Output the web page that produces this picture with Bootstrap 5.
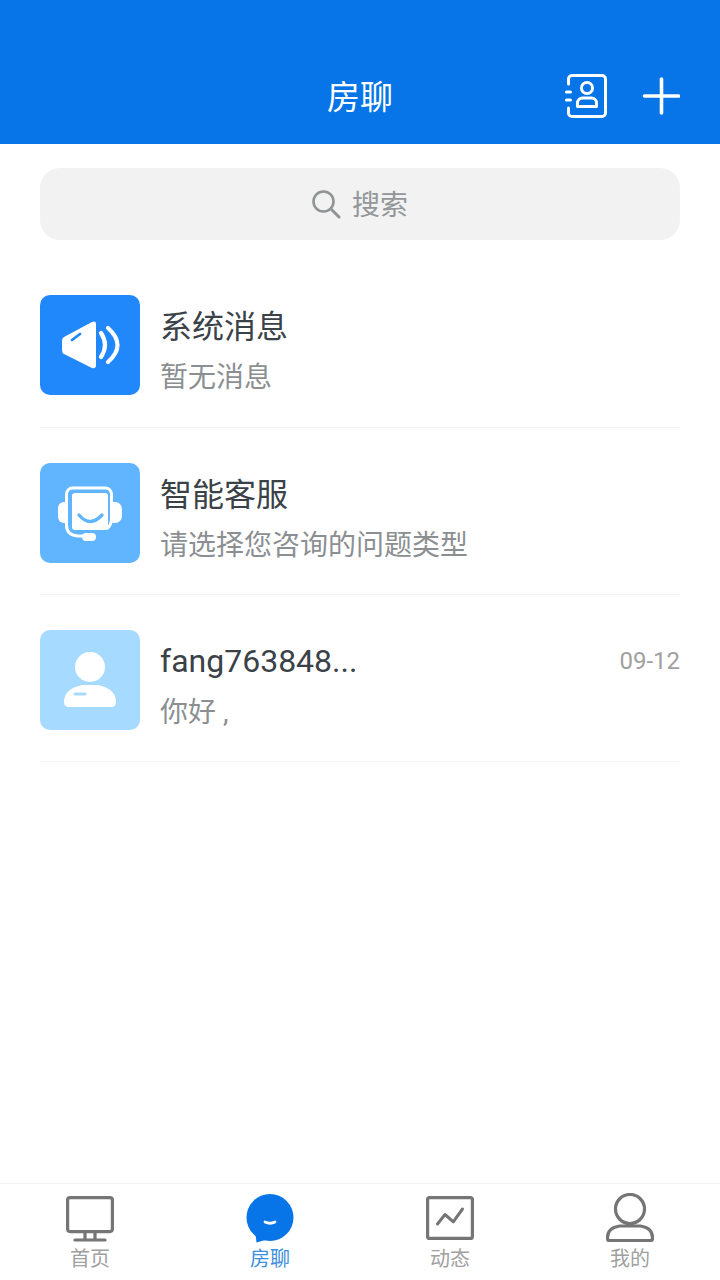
<!DOCTYPE html>
<html lang="zh-CN">
<head>
<meta charset="utf-8">
<title>房聊</title>
<link href="https://cdn.jsdelivr.net/npm/bootstrap@5.3.0/dist/css/bootstrap.min.css" rel="stylesheet">
<style>
html,body{height:100%;margin:0}
body{width:720px;height:1280px;background:#fff;font-family:Roboto,"Noto Sans CJK SC",sans-serif;overflow:hidden}
.app-shell{height:1280px}
.top-bar{height:144px;background:#0774e8;padding-top:50px}
.top-title{font-size:33px;line-height:96px;color:#fff;width:100%;text-align:center}
.top-actions{right:40px;top:48px;height:96px;gap:35px}
.search-box{height:72px;margin:24px 40px 0;background:#f2f2f2;border-radius:20px;color:#93979a;font-size:28px;gap:10px}
.search-label{position:relative;top:2px}
.chat-list{margin:21px 40px 0}
.chat-row{height:167px;border-bottom:1px solid #f3f3f3;padding-top:35px;gap:20px}
.chat-row:first-child{padding-top:34px}
.chat-pic{width:100px;height:100px;border-radius:10px;flex:none}
.pic-a{background:#2188fb}.pic-b{background:#61b5fe}.pic-c{background:#a7daff}
.chat-pic svg{display:block}
.chat-name{font-size:32px;line-height:44px;color:#3a4147;margin-top:10px}
.chat-latin{font-size:32px;margin-top:9px}
.chat-sub{font-size:28px;line-height:40px;color:#8b8f92;margin-top:9px}
.chat-latin + .chat-sub{margin-top:10px}
.chat-date{font-size:24px;color:#a0a0a0;line-height:44px;margin-top:9px}
.tab-strip{height:97px;border-top:1px solid #f2f2f2}
.tab-cell{width:180px;color:#a0a0a0;font-size:20px;line-height:24px}
.tab-cell svg{display:block;height:50px;margin-top:9px}
.tab-cell.tab-on{color:#3b8fe0}
.tab-text{margin-top:4px}
</style>
</head>
<body>
<div class="app-shell d-flex flex-column">
  <header class="top-bar position-relative d-flex">
    <div class="top-title">房聊</div>
    <div class="top-actions position-absolute d-flex align-items-center">
      <svg width="42" height="44" viewBox="565 74 42 44" fill="none" stroke="#fff" stroke-linecap="round" stroke-linejoin="round">
        <path d="M568.500 84v-5a3.500 3.500 0 0 1 3.500-3.500h30a3.500 3.500 0 0 1 3.500 3.500v34a3.500 3.500 0 0 1-3.500 3.500h-30a3.500 3.500 0 0 1-3.500-3.500v-5" stroke-width="3"/>
        <path d="M566.500 92h4M566.500 100h4" stroke-width="3"/>
        <circle cx="587" cy="88" r="5.500" stroke-width="3"/>
        <path d="M577.500 106.500v-3.500a5 5 0 0 1 5-5h9a5 5 0 0 1 5 5v3.500z" stroke-width="3"/>
      </svg>
      <svg width="38" height="38" viewBox="0 0 38 38" stroke="#fff" stroke-width="3.600" stroke-linecap="round"><path d="M19.500 2v34M2.500 19h34"/></svg>
    </div>
  </header>

  <div class="search-box d-flex align-items-center justify-content-center">
    <svg width="30" height="30" viewBox="2 0 30 30" fill="none" stroke="#8f9497" stroke-width="2.600" stroke-linecap="round"><circle cx="13.500" cy="12.500" r="10"/><path d="M21 20l8 8" stroke-width="3"/></svg>
    <span class="search-label">搜索</span>
  </div>

  <main class="chat-list flex-grow-1">
    <div class="chat-row d-flex">
      <div class="chat-pic pic-a">
        <svg width="100" height="100" viewBox="40 295 100 100" fill="none">
          <path d="M62 341q0-3 2-4L92 322q4-1.500 4 2v41q0 4-4 3L64 354q-2-1-2-4z" fill="#fff"/>
          <path d="M72 340l8-6" stroke="#2188fb" stroke-width="2.800" stroke-linecap="round"/>
          <path d="M101 333q8 12 0 24" stroke="#fff" stroke-width="4.200" stroke-linecap="round"/>
          <path d="M108 328q19 17 0 34" stroke="#fff" stroke-width="4.200" stroke-linecap="round"/>
        </svg>
      </div>
      <div class="flex-grow-1">
        <div class="chat-name">系统消息</div>
        <div class="chat-sub">暂无消息</div>
      </div>
    </div>

    <div class="chat-row d-flex">
      <div class="chat-pic pic-b">
        <svg width="100" height="100" viewBox="40 463 100 100" fill="none">
          <path d="M65 502h-1a6 6 0 0 0-6 6v9a6 6 0 0 0 6 6h1z" fill="#fff"/>
          <path d="M112 502h3a7 7 0 0 1 7 7v7a7 7 0 0 1-7 7h-3z" fill="#fff"/>
          <path d="M66.500 526V494a6 6 0 0 1 6-6h33a6 6 0 0 1 6 6v24q0 8-5 11" stroke="#fff" stroke-width="3"/>
          <rect x="72" y="493" width="36" height="37" rx="3" fill="#fff"/>
          <path d="M79 515q11 13 23 0" stroke="#61b5fe" stroke-width="3.400" stroke-linecap="round"/>
          <path d="M66.500 525q0 10 11 11h8" stroke="#fff" stroke-width="3"/>
          <rect x="82" y="533" width="14" height="8" rx="4" fill="#fff"/>
        </svg>
      </div>
      <div class="flex-grow-1">
        <div class="chat-name">智能客服</div>
        <div class="chat-sub">请选择您咨询的问题类型</div>
      </div>
    </div>

    <div class="chat-row d-flex">
      <div class="chat-pic pic-c">
        <svg width="100" height="100" viewBox="40 630 100 100" fill="none">
          <circle cx="90" cy="667" r="15" fill="#fff"/>
          <path d="M64 702q0-13 18-17h16q18 4 18 17q0 5-5 5H69q-5 0-5-5z" fill="#fff"/>
          <path d="M75 694h10" stroke="#a7daff" stroke-width="3" stroke-linecap="round"/>
        </svg>
      </div>
      <div class="flex-grow-1 d-flex justify-content-between">
        <div>
          <div class="chat-name chat-latin">fang763848...</div>
          <div class="chat-sub">你好 ,</div>
        </div>
        <div class="chat-date">09-12</div>
      </div>
    </div>
  </main>

  <nav class="tab-strip d-flex">
    <div class="tab-cell d-flex flex-column align-items-center">
      <svg width="48" height="50" viewBox="0 0 48 50" fill="none" stroke="#757575" stroke-width="3.200">
        <rect x="1.600" y="4.600" width="44.800" height="34" rx="2.500"/>
        <path d="M19 39v8M29 39v8"/>
        <path d="M9 47h30" stroke-linecap="round"/>
      </svg>
      <div class="tab-text">首页</div>
    </div>
    <div class="tab-cell tab-on d-flex flex-column align-items-center">
      <svg width="48" height="50" viewBox="0 0 48 50" fill="none">
        <circle cx="24" cy="24.500" r="23.500" fill="#0774e8"/>
        <path d="M9 38l1.500 11.500L23 46z" fill="#0774e8"/>
        <path d="M19 29q5 2.500 10 0" stroke="#fff" stroke-width="2.800" stroke-linecap="round"/>
      </svg>
      <div class="tab-text">房聊</div>
    </div>
    <div class="tab-cell d-flex flex-column align-items-center">
      <svg width="48" height="50" viewBox="0 0 48 50" fill="none" stroke="#757575">
        <rect x="1.600" y="4.600" width="44.800" height="40.800" rx="2" stroke-width="3.200"/>
        <path d="M11.500 31l7.500-9.500 8.300 7.300L36.500 16" stroke-width="3" stroke-linecap="round" stroke-linejoin="round"/>
      </svg>
      <div class="tab-text">动态</div>
    </div>
    <div class="tab-cell d-flex flex-column align-items-center">
      <svg width="48" height="50" viewBox="0 0 48 50" fill="none" stroke="#757575" stroke-width="3.200">
        <circle cx="24" cy="16" r="14.500"/>
        <path d="M1.600 46v-2q0-9 12-11h20.800q12 2 12 11v2a1.500 1.500 0 0 1-1.500 1.500H3.100a1.500 1.500 0 0 1-1.500-1.500z" stroke-linejoin="round"/>
      </svg>
      <div class="tab-text">我的</div>
    </div>
  </nav>
</div>
<script src="https://cdn.jsdelivr.net/npm/bootstrap@5.3.0/dist/js/bootstrap.bundle.min.js"></script>
</body>
</html>
